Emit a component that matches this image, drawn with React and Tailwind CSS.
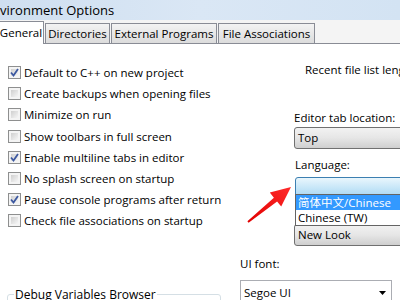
import React from "react";

const font = { fontFamily: '"Open Sans", "Noto Sans CJK SC", sans-serif' };

const options = [
  ["Default to C++ on new project", true],
  ["Create backups when opening files", false],
  ["Minimize on run", false],
  ["Show toolbars in full screen", false],
  ["Enable multiline tabs in editor", true],
  ["No splash screen on startup", false],
  ["Pause console programs after return", true],
  ["Check file associations on startup", false],
];

// label + width in px, to match the tab strip
const tabs = [
  ["Directories", "w-[65px]"],
  ["External Programs", "w-[106px]"],
  ["File Associations", "w-[97px]"],
];

function Checkbox({ checked }) {
  return (
    <span className="w-[13px] h-[13px] shrink-0 border border-[#8e8f8f] bg-[#f4f4f4] p-[2px] flex">
      <span className="flex-1 bg-gradient-to-br from-[#cfcfcf] to-[#f6f6f6] flex items-center justify-center">
        {checked && (
          <svg width="9" height="9" viewBox="0 0 9 9" className="-m-[1px]">
            <path d="M1 4.5 L3.5 7.5 L8 1" fill="none" stroke="#3c58a0" strokeWidth="1.8" />
          </svg>
        )}
      </span>
    </span>
  );
}

function GrayCombo({ children, className = "" }) {
  return (
    <div
      className={`h-[22px] w-[130px] border border-[#707070] rounded-[3px] bg-gradient-to-b from-[#f2f2f2] via-[#e6e6e6] to-[#cfcfcf] flex items-center pl-[3px] text-black ${className}`}
    >
      {children}
    </div>
  );
}

export default function App() {
  return (
    <div className="w-[400px] h-[300px] overflow-hidden bg-white relative text-black" style={font}>
      {/* title bar */}
      <div className="h-[20px] bg-gradient-to-r from-[#cfdff0] via-[#dae7f5] to-[#d3e3f3] flex items-center text-[13px] leading-none">
        vironment Options
      </div>

      {/* tabs */}
      <div className="h-[23px] bg-[#f4f4f4] flex items-end text-[11.5px]">
        <div className="h-[23px] w-[46px] -ml-[2px] bg-white border border-b-0 border-[#898c95] flex items-center justify-center relative top-[1px] z-10 overflow-hidden">
          General
        </div>
        {tabs.map(([t, w]) => (
          <div
            key={t}
            className={`h-[20px] ml-[1px] ${w} border border-b-0 border-[#898c95] bg-gradient-to-b from-[#f3f3f3] to-[#dcdcdc] flex items-center justify-center whitespace-nowrap`}
          >
            {t}
          </div>
        ))}
      </div>

      {/* panel */}
      <div className="border-t border-[#898c95] flex text-[11.5px]">
        <div className="w-[240px] shrink-0 pt-[18px] flex flex-col">
          {options.map(([label, checked]) => (
            <div key={label} className="h-[21.2px] pl-[8px] flex items-center gap-[3px] whitespace-nowrap">
              <Checkbox checked={checked} />
              <span>{label}</span>
            </div>
          ))}
          <fieldset className="mt-[55px] ml-[7px] w-[214px] h-[40px] border border-[#d5dfe5] rounded-[3px] px-[6px]">
            <legend className="px-[1px] leading-[16px] text-[12px]">Debug Variables Browser</legend>
          </fieldset>
        </div>

        <div className="flex-1 pt-[18px] flex flex-col whitespace-nowrap">
          <div className="pl-[65px] leading-[16px]">Recent file list length:</div>
          <div className="pl-[54px] mt-[32px] leading-[16px]">Editor tab location:</div>
          <GrayCombo className="ml-[54px] mt-[1px]">Top</GrayCombo>
          <div className="pl-[55px] mt-[8px] leading-[16px]">Language:</div>
          <div className="ml-[55px] relative z-10">
            <div className="mt-[4px] h-[21px] w-[130px] border border-[#3c7fb1] rounded-[3px] bg-gradient-to-b from-[#e9f6fd] via-[#c8e7f8] to-[#a8d6f3]" />
            <div className="absolute left-0 top-[21px] w-[130px] border border-[#646464] bg-white">
              <div className="h-[15px] bg-[#3399ff] text-white pl-[2px] flex items-center">简体中文/Chinese</div>
              <div className="h-[15px] pl-[2px] flex items-center">Chinese (TW)</div>
            </div>
          </div>
          <GrayCombo className="ml-[54px] mt-[26px]">New Look</GrayCombo>
          <div className="mt-[10px] leading-[16px]">UI font:</div>
          <div className="mt-[8px] h-[26px] w-[152px] border border-[#abadb3] bg-white flex items-center justify-between pl-[3px] pr-[5px]">
            <span>Segoe UI</span>
            <svg width="7" height="4" viewBox="0 0 7 4">
              <path d="M0 0 H7 L3.5 4 Z" fill="#000" />
            </svg>
          </div>
        </div>
      </div>

      {/* red annotation arrow */}
      <svg className="absolute left-[244px] top-[184px]" width="52" height="42" viewBox="0 0 52 42">
        <defs>
          <linearGradient id="arr" x1="0" y1="1" x2="1" y2="0">
            <stop offset="0" stopColor="#e00000" />
            <stop offset="1" stopColor="#ff2a2a" />
          </linearGradient>
        </defs>
        <polygon
          points="3.4,37.2 29.9,13.7 25.8,8.6 47,3 37.2,22.6 33.1,17.5 4.6,38.8"
          fill="url(#arr)"
        />
      </svg>
    </div>
  );
}
